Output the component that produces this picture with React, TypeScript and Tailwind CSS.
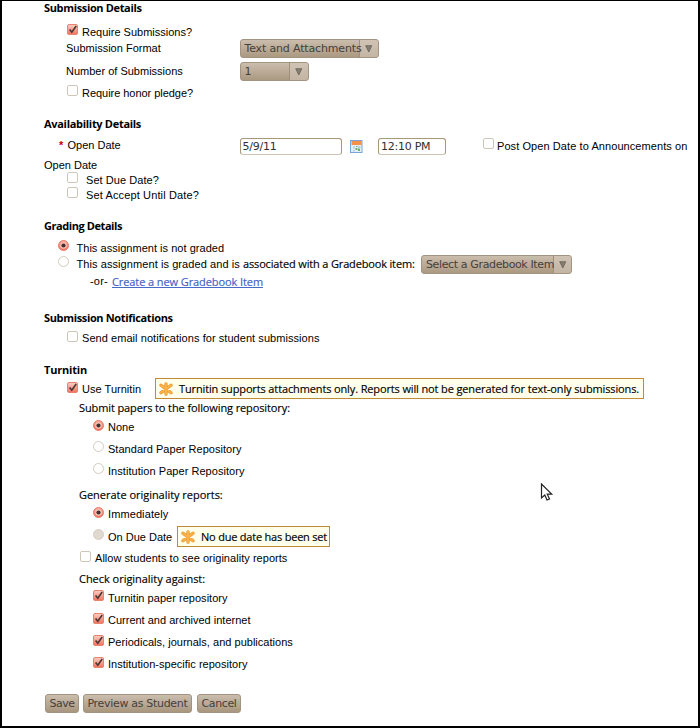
import type { ReactNode } from "react";

const humanist = "font-['Open_Sans',sans-serif] font-medium [-webkit-text-stroke:0.15px_currentColor]";
const dejavu = "font-['DejaVu_Sans',sans-serif]";

function Heading({ children, track = "tracking-[-0.35px]", leading = "leading-[16px]" }: { children: ReactNode; track?: string; leading?: string }) {
  return <h2 className={`h-[15px] font-['Open_Sans',sans-serif] text-[11px] font-bold ${leading} ${track}`}>{children}</h2>;
}

function Check({ on = false }: { on?: boolean }) {
  return (
    <svg width="12" height="12" viewBox="0 0 12 12" className="shrink-0">
      <defs>
        <linearGradient id="checkFill" x1="0" y1="0" x2="0" y2="1">
          <stop offset="0" stopColor="#fbd0c6" />
          <stop offset="1" stopColor="#f0705c" />
        </linearGradient>
      </defs>
      <rect x="0.5" y="0.5" width="10" height="10" rx="1.5" fill={on ? "url(#checkFill)" : "#fff"} stroke={on ? "#ea8270" : "#cfc6b9"} />
      {on && <path d="M2.6 5.4 4.8 8.2 9.2 2" fill="none" stroke="#4a3434" strokeWidth="1.6" />}
    </svg>
  );
}

function Radio({ on = false, disabled = false }: { on?: boolean; disabled?: boolean }) {
  return (
    <svg width="12" height="12" viewBox="0 0 12 12" className="shrink-0">
      <defs>
        <linearGradient id="radioFill" x1="0" y1="0" x2="0" y2="1">
          <stop offset="0" stopColor="#f8ad9f" />
          <stop offset="1" stopColor="#f06d58" />
        </linearGradient>
      </defs>
      <circle cx="5.5" cy="5.5" r="5" fill={on ? "url(#radioFill)" : disabled ? "#e0d9d0" : "#fff"} stroke={on ? "#ea7c6a" : disabled ? "#d6cec4" : "#d3cbbf"} />
      {on && <circle cx="5.5" cy="5.5" r="3.3" fill="#f9c2b7" />}
      {on && <circle cx="5.5" cy="5.5" r="2.1" fill="#453030" />}
    </svg>
  );
}

function Select({ children, width, arrow, track }: { children: ReactNode; width: string; arrow: string; track: string }) {
  return (
    <span className={`flex h-[19px] shrink-0 overflow-hidden rounded-[3px] border border-[#a39381] bg-linear-to-b from-[#cbbdad] to-[#ab9981] text-[#45403a] ${dejavu} ${width}`}>
      <span className={`w-0 flex-1 whitespace-nowrap pl-[4px] text-[11px] leading-[17px] ${track}`}>
        <span className="relative z-10">{children}</span>
      </span>
      <span className={`flex items-center justify-center border-l border-[#a08f7b] bg-[#d3c8bb]/60 ${arrow}`}>
        <svg width="8" height="8" viewBox="0 0 8 8"><path d="M.7.7h6.1L3.8 7z" fill="#857d71" stroke="#6a6258" strokeWidth=".8" /></svg>
      </span>
    </span>
  );
}

function Star() {
  return (
    <svg width="14" height="14" viewBox="0 0 14 14" className="shrink-0">
      <path d="M7 1.8v10.4M2 3.2l10 7.6M12 3.2l-10 7.6" stroke="#e8962e" strokeWidth="3.3" strokeLinecap="round" />
      <path d="M7 1.8v10.4M2 3.2l10 7.6M12 3.2l-10 7.6" stroke="#fbb349" strokeWidth="1.9" strokeLinecap="round" />
    </svg>
  );
}

function Notice({ children, className }: { children: ReactNode; className: string }) {
  return (
    <span className={`flex h-[21px] shrink-0 items-center border border-[#c08a3a] bg-[#ffffec] ${humanist} ${className}`}>
      <Star />
      <span className="pl-[6px]">{children}</span>
    </span>
  );
}

function CalendarIcon() {
  return (
    <svg width="13" height="13" viewBox="0 0 13 13" className="shrink-0">
      <rect x=".5" y=".5" width="11.5" height="12" fill="#e4effb" stroke="#7ba3d6" />
      <rect x="1.5" y="1" width="10" height="4" fill="#f29147" />
      <path d="M3 6.5h2v2H3zM8 6h2.5v2H8zM3 10h2v1.5H3z" fill="#bcd0e6" />
      <path d="M5.5 8h2v2h-2zM8 8.5h2V11H8zM6 6h1.5v1H6z" fill="#6cb36a" />
    </svg>
  );
}

function Field({ children, className }: { children: ReactNode; className: string }) {
  return (
    <span className={`h-[17px] shrink-0 rounded-[3px] border border-[#a89878] border-b-[#cdc4b4] bg-white pl-[2px] leading-[15px] text-[#303030] ${dejavu} ${className}`}>{children}</span>
  );
}

function Button({ children, className }: { children: ReactNode; className: string }) {
  return (
    <button className={`h-[19px] shrink-0 rounded-[3px] border border-[#a39381] bg-linear-to-b from-[#cbbdad] to-[#a8967e] text-center text-[11px] leading-[17px] text-[#45403a] ${dejavu} ${className}`}>{children}</button>
  );
}

export default function App() {
  return (
    <main className="h-[728px] w-[700px] overflow-hidden whitespace-nowrap border-t border-r-2 border-b-2 border-l-2 border-black bg-white pl-[42px] font-['Liberation_Sans',sans-serif] text-[11px] leading-[15px] text-black">
      <section className="h-[115px]">
        <Heading leading="leading-[14px]">Submission Details</Heading>
        <div className="mt-[8px] flex h-[17px] pl-[23px]"><Check on /><span className="pl-[3px] pt-px">Require Submissions?</span></div>
        <div className="flex h-[23px] pl-[22px]">
          <span className="w-[173.5px]">Submission Format</span>
          <span className="-mt-[2px]"><Select width="w-[139px]" arrow="w-[19px]" track="tracking-[-0.16px]">Text and Attachments</Select></span>
        </div>
        <div className="flex h-[22px] pl-[22px]">
          <span className="w-[173.5px]">Number of Submissions</span>
          <span className="-mt-[2px]"><Select width="w-[69px]" arrow="w-[19px]" track="">1</Select></span>
        </div>
        <div className="-mt-px flex pl-[23px]"><Check /><span className="pl-[3px] pt-px tracking-[-0.04px]">Require honor pledge?</span></div>
      </section>

      <section className="h-[102px]">
        <Heading track="tracking-[-0.3px]">Availability Details</Heading>
        <div className="mt-[7px] flex h-[19px] pl-[15px]">
          <span className="w-[8.5px] font-bold text-[#c00]">*</span>
          <span className="w-[172px]">Open Date</span>
          <Field className="w-[102px] tracking-[-0.23px]">5/9/11</Field>
          <span className="mt-[2px] ml-[8px]"><CalendarIcon /></span>
          <Field className="ml-[15.5px] w-[67.5px] tracking-[-0.25px]">12:10 PM</Field>
          <span className="ml-[37px]"><Check /></span>
          <span className="pl-[2.5px] pt-px tracking-[0.08px]">Post Open Date to Announcements on</span>
        </div>
        <div className="h-[15px] pt-px">Open Date</div>
        <div className="flex h-[15px] pl-[23px]"><Check /><span className="pl-[7px] pt-px tracking-[0.06px]">Set Due Date?</span></div>
        <div className="flex h-[15px] pl-[23px]"><Check /><span className="pl-[7px] pt-px tracking-[0.13px]">Set Accept Until Date?</span></div>
      </section>

      <section className="h-[92px]">
        <Heading track="tracking-[-0.43px]">Grading Details</Heading>
        <div className="mt-[7px] flex h-[17px] pl-[14px]"><Radio on /><span className="pl-[6.5px] pt-px tracking-[0.03px]">This assignment is not graded</span></div>
        <div className="-mt-px flex h-[18px] pl-[14px]">
          <Radio />
          <span className="w-[345px] pl-[6.5px] tracking-[0.08px]">This assignment is graded and is <span className={`${humanist} tracking-[-0.16px]`}>associated with a Gradebook item:</span></span>
          <span className="ml-[6px] -mt-px"><Select width="w-[151px]" arrow="w-[18px]" track="tracking-[-0.37px]">Select a Gradebook Item</Select></span>
        </div>
        <div className="flex pl-[46px]">
          <span className="w-[22px] tracking-[0.2px]">-or-</span>
          <a className={`${humanist} h-[14px] border-b border-[#4a68c4] tracking-[-0.09px] text-[#3f60c4]`}>Create a new Gradebook Item</a>
        </div>
      </section>

      <section className="h-[52px]">
        <Heading>Submission Notifications</Heading>
        <div className="mt-[6px] flex pl-[23px]"><Check /><span className="pl-[3px] tracking-[0.056px]">Send email notifications for student submissions</span></div>
      </section>

      <section className="h-[331px]">
        <Heading track="tracking-[-0.19px]">Turnitin</Heading>
        <div className="mt-[5px] flex h-[19px] pl-[23px]">
          <Check on />
          <span className="w-[76px] pl-[3px] tracking-[0.03px]">Use Turnitin</span>
          <span className="-mt-[4px]"><Notice className="w-[489px] pl-[3px] tracking-[-0.13px]">Turnitin supports attachments only. Reports will not be generated for text-only submissions.</Notice></span>
        </div>
        <div className={`h-[19px] pl-[35px] leading-[14px] tracking-[-0.11px] ${humanist}`}>Submit papers to the following repository:</div>
        <div className="flex h-[21px] pl-[49px]"><Radio on /><span className="pl-[3px]">None</span></div>
        <div className="flex h-[22px] pl-[49px]"><Radio /><span className="pl-[3px] pt-px tracking-[0.03px]">Standard Paper Repository</span></div>
        <div className="flex h-[25px] pl-[49px]"><Radio /><span className="pl-[3px] pt-px tracking-[0.05px]">Institution Paper Repository</span></div>
        <div className={`h-[19px] pl-[35px] leading-[14px] tracking-[-0.03px] ${humanist}`}>Generate originality reports:</div>
        <div className="flex h-[22px] pl-[49px]"><Radio on /><span className="pl-[3px] tracking-[0.1px]">Immediately</span></div>
        <div className="flex h-[22px] pl-[49px]">
          <Radio disabled />
          <span className="w-[72px] pl-[3px] pt-px">On Due Date</span>
          <span className="-mt-[3px]"><Notice className="w-[153px] pl-[3px] tracking-[-0.21px]">No due date has been set</Notice></span>
        </div>
        <div className="flex h-[21px] pl-[36px]"><Check /><span className="pl-[3px] tracking-[0.04px]">Allow students to see originality reports</span></div>
        <div className={`h-[18px] pl-[35px] leading-[14px] tracking-[-0.03px] ${humanist}`}>Check originality against:</div>
        <div className="flex h-[23px] pl-[49px]"><Check on /><span className="pl-[3px] pt-px tracking-[0.03px]">Turnitin paper repository</span></div>
        <div className="flex h-[22px] pl-[49px]"><Check on /><span className="pl-[3px]">Current and archived internet</span></div>
        <div className="flex h-[22px] pl-[49px]"><Check on /><span className="pl-[3px] tracking-[0.02px]">Periodicals, journals, and publications</span></div>
        <div className="flex h-[22px] pl-[49px]"><Check on /><span className="pl-[3px] tracking-[0.02px]">Institution-specific repository</span></div>
      </section>

      <footer className="flex pt-px pl-px">
        <Button className="w-[34px] tracking-[-0.5px]">Save</Button>
        <Button className="ml-[4px] w-[109px] tracking-[-0.31px]">Preview as Student</Button>
        <Button className="ml-[5px] w-[44px] tracking-[-0.38px]">Cancel</Button>
      </footer>

      <svg className="absolute top-[483px] left-[540px]" width="14" height="20" viewBox="0 0 14 20">
        <path d="M1.5 1v14l3.3-3 2.2 5 2.5-1-2.2-4.8h4.4z" fill="#fff" stroke="#222" strokeWidth="1.2" />
      </svg>
    </main>
  );
}
